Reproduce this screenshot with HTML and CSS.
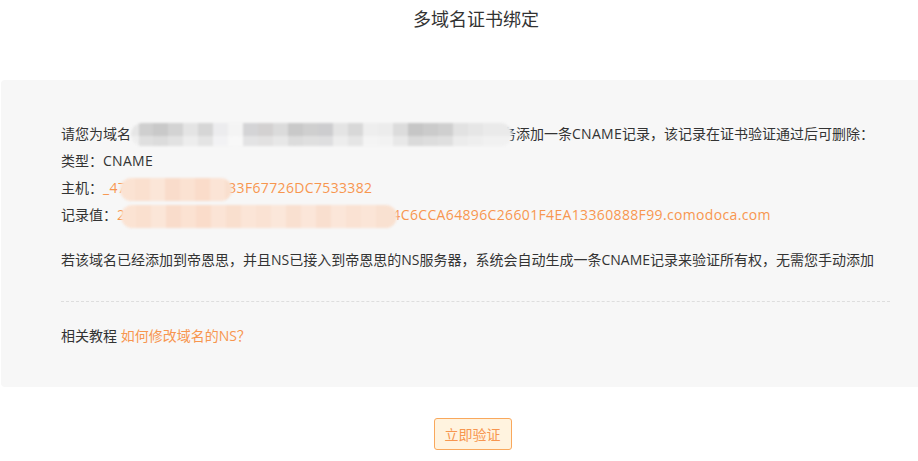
FILE: index.html
```html
<!DOCTYPE html>
<html lang="zh-CN">
<head>
<meta charset="utf-8">
<title>多域名证书绑定</title>
<link rel="stylesheet" href="styles.css">
</head>
<body>
<div class="page">
  <h1 class="title">多域名证书绑定</h1>
  <div class="panel">
    <div class="records">
      <p class="line">请您为域名<span class="mask mask-grey"></span>务添加一条<span class="latin">CNAME</span>记录，该记录在证书验证通过后可删除：</p>
      <p class="line">类型：<span class="latin">CNAME</span></p>
      <p class="line">主机：<span class="orange code">_47<span class="mask mask-orange mask-host"></span>33F67726DC7533382</span></p>
      <p class="line">记录值：<span class="orange code">2<span class="mask mask-orange mask-value"></span>4C6CCA64896C26601F4EA13360888F99.comodoca.com</span></p>
    </div>
    <p class="line note">若该域名已经添加到帝恩思，并且NS已接入到帝恩思的NS服务器，系统会自动生成一条CNAME记录来验证所有权，无需您手动添加</p>
    <div class="divider"></div>
    <p class="line">相关教程 <a class="orange link" href="#">如何修改域名的NS？</a></p>
  </div>
  <div class="actions">
    <button class="btn" type="button">立即验证</button>
  </div>
</div>
</body>
</html>
```
FILE: styles.css
```css
* { box-sizing: border-box; }
html, body { margin: 0; padding: 0; background: #fff; }
body {
  font-family: "Open Sans", "Noto Sans CJK SC", sans-serif;
  color: #333;
  font-size: 14px;
}
.page { width: 918px; }
.title {
  margin: 0;
  height: 80px;
  padding: 5px 0 0 34px;
  font-family: "Noto Sans CJK SC", sans-serif;
  font-size: 18px;
  font-weight: normal;
  line-height: 26px;
  text-align: center;
  color: #333;
}
.panel {
  margin-left: 1px;
  background: #f7f7f7;
  border-radius: 4px 0 0 4px;
  padding: 40px 28px 38px 60px;
}
.line {
  margin: 0;
  line-height: 27px;
  white-space: nowrap;
  color: #333;
}
.orange { color: #f7964f; }
.code { letter-spacing: 0.35px; }
.latin { letter-spacing: 0.3px; }
.link { text-decoration: none; }
.note { margin-top: 18px; }
.divider {
  margin: 28px 0 20px;
  border-top: 1px dashed #dedede;
}
.mask {
  display: inline-block;
  vertical-align: middle;
  height: 23px;
  border-radius: 12px;
  filter: blur(1.2px);
  position: relative;
}
.mask-grey {
  width: 381px;
  margin-right: -10px;
  margin-top: -2px;
  background:
    linear-gradient(to bottom, rgba(0,0,0,0) 55%, rgba(255,255,255,0.35) 55%),
    linear-gradient(to right,
      #e6e6e6 0 8px, #cfcfcf 8px 22px, #c9c9c9 22px 37px, #d3d3d3 37px 52px,
      #e4e4e4 52px 67px, #d6d6d6 67px 82px, #ececee 82px 97px, #f4f4f4 97px 112px,
      #d4d4d6 112px 127px, #d3d1d1 127px 142px, #dbdbdb 142px 157px, #c9c9c9 157px 172px,
      #cfcfcf 172px 187px, #cdcdcf 187px 202px, #e4e4e4 202px 217px, #d8d8d8 217px 232px,
      #eeeeee 232px 247px, #ececec 247px 262px, #dcdcdc 262px 277px, #c6c6c6 277px 292px,
      #cbcbcb 292px 307px, #cfcfcf 307px 322px, #e2e2e2 322px 337px, #e6e6e6 337px 352px,
      #eaeaea 352px 381px);
  z-index: 1;
}
.mask-orange {
  background: linear-gradient(to right,
    #fbe3d3 0 15px, #fae0cf 15px 30px, #fbe6d8 30px 45px, #f9dccb 45px 60px,
    #fbe2d2 60px 75px, #fadcca 75px 90px, #fbe4d6 90px 105px, #f9dfce 105px 120px,
    #fbe5d7 120px 135px, #fae2d3 135px 150px, #fbe7da 150px 165px, #f9e0d0 165px 180px,
    #fbe6d9 180px 195px, #f9dfcf 195px 210px, #fbe6d9 210px 225px, #fae2d3 225px 240px,
    #fbe5d7 240px 255px, #f9e1d1 255px 280px);
}
.mask-host {
  width: 112px;
  margin-left: -6px;
  margin-right: -4px;
}
.mask-value {
  width: 276px;
  margin-left: -4px;
  margin-right: -5px;
}
.actions {
  padding: 31px 0 0 27px;
  display: flex;
  justify-content: center;
}
.btn {
  width: 78px;
  height: 32px;
  padding: 0;
  font-family: "Noto Sans CJK SC", sans-serif;
  font-size: 14px;
  color: #f7964f;
  background: #fff3df;
  border: 1px solid #f9a85c;
  border-radius: 3px;
  cursor: pointer;
}
```
